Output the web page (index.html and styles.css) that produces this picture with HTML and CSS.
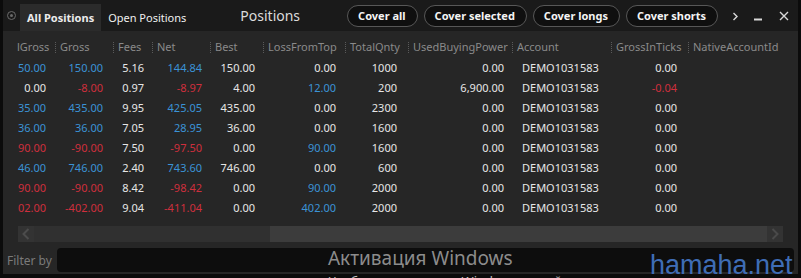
FILE: index.html
```html
<!DOCTYPE html>
<html>
<head>
<meta charset="utf-8">
<link rel="stylesheet" href="styles.css">
</head>
<body>
<div class="window">
  <div class="titlebar">
    <span class="win-icon"></span>
    <div class="tab active">All Positions</div>
    <div class="tab">Open Positions</div>
    <div class="title">Positions</div>
    <div class="buttons">
      <button class="pill">Cover all</button>
      <button class="pill">Cover selected</button>
      <button class="pill">Cover longs</button>
      <button class="pill">Cover shorts</button>
    </div>
    <div class="controls">
      <svg class="ctl-more" width="7" height="9" viewBox="0 0 7 9"><path d="M1.5 1 L5 4.5 L1.5 8" fill="none" stroke="#d8d8d8" stroke-width="1.4"/></svg>
      <svg class="ctl-min" width="9" height="9" viewBox="0 0 9 9"><rect x="0" y="6.5" width="8" height="2" fill="#d8d8d8"/></svg>
      <svg class="ctl-close" width="10" height="10" viewBox="0 0 10 10"><path d="M1 1 L9 9 M9 1 L1 9" stroke="#d8d8d8" stroke-width="1.4"/></svg>
    </div>
  </div>

  <div class="table">
    <div class="row head">
      <div class="h first">lGross</div>
      <div class="h">Gross</div>
      <div class="h">Fees</div>
      <div class="h">Net</div>
      <div class="h">Best</div>
      <div class="h">LossFromTop</div>
      <div class="h">TotalQnty</div>
      <div class="h">UsedBuyingPower</div>
      <div class="h">Account</div>
      <div class="h">GrossInTicks</div>
      <div class="h">NativeAccountId</div>
      <div class="h"></div>
    </div>

    <div class="row">
      <div class="c b">50.00</div><div class="c b">150.00</div><div class="c">5.16</div><div class="c b">144.84</div><div class="c">150.00</div><div class="c">0.00</div><div class="c">1000</div><div class="c">0.00</div><div class="c acc">DEMO1031583</div><div class="c">0.00</div><div class="c"></div>
    </div>
    <div class="row">
      <div class="c">0.00</div><div class="c r">-8.00</div><div class="c">0.97</div><div class="c r">-8.97</div><div class="c">4.00</div><div class="c b">12.00</div><div class="c">200</div><div class="c">6,900.00</div><div class="c acc">DEMO1031583</div><div class="c r">-0.04</div><div class="c"></div>
    </div>
    <div class="row">
      <div class="c b">35.00</div><div class="c b">435.00</div><div class="c">9.95</div><div class="c b">425.05</div><div class="c">435.00</div><div class="c">0.00</div><div class="c">2300</div><div class="c">0.00</div><div class="c acc">DEMO1031583</div><div class="c">0.00</div><div class="c"></div>
    </div>
    <div class="row">
      <div class="c b">36.00</div><div class="c b">36.00</div><div class="c">7.05</div><div class="c b">28.95</div><div class="c">36.00</div><div class="c">0.00</div><div class="c">1600</div><div class="c">0.00</div><div class="c acc">DEMO1031583</div><div class="c">0.00</div><div class="c"></div>
    </div>
    <div class="row">
      <div class="c r">90.00</div><div class="c r">-90.00</div><div class="c">7.50</div><div class="c r">-97.50</div><div class="c">0.00</div><div class="c b">90.00</div><div class="c">1600</div><div class="c">0.00</div><div class="c acc">DEMO1031583</div><div class="c">0.00</div><div class="c"></div>
    </div>
    <div class="row">
      <div class="c b">46.00</div><div class="c b">746.00</div><div class="c">2.40</div><div class="c b">743.60</div><div class="c">746.00</div><div class="c">0.00</div><div class="c">600</div><div class="c">0.00</div><div class="c acc">DEMO1031583</div><div class="c">0.00</div><div class="c"></div>
    </div>
    <div class="row">
      <div class="c r">90.00</div><div class="c r">-90.00</div><div class="c">8.42</div><div class="c r">-98.42</div><div class="c">0.00</div><div class="c b">90.00</div><div class="c">2000</div><div class="c">0.00</div><div class="c acc">DEMO1031583</div><div class="c">0.00</div><div class="c"></div>
    </div>
    <div class="row">
      <div class="c r">02.00</div><div class="c r">-402.00</div><div class="c">9.04</div><div class="c r">-411.04</div><div class="c">0.00</div><div class="c b">402.00</div><div class="c">2000</div><div class="c">0.00</div><div class="c acc">DEMO1031583</div><div class="c">0.00</div><div class="c"></div>
    </div>
  </div>

  <div class="hscroll">
    <div class="sb-btn left"><svg width="8" height="12" viewBox="0 0 8 12"><path d="M6.5 1 L1.5 6 L6.5 11" fill="none" stroke="#4c4c4c" stroke-width="2"/></svg></div>
    <div class="sb-track"></div>
    <div class="sb-thumb"></div>
    <div class="sb-btn right"><svg width="8" height="12" viewBox="0 0 8 12"><path d="M1.5 1 L6.5 6 L1.5 11" fill="none" stroke="#4a4a4a" stroke-width="2"/></svg></div>
  </div>

  <div class="filter">
    <span class="filter-label">Filter by</span>
    <div class="filter-input"></div>
  </div>
</div>

<div class="wm-win">
  <div class="wm-title">Активация Windows</div>
  <div class="wm-sub">Чтобы активировать Windows, перейдите в параметры.</div>
</div>
<div class="wm-site">hamaha.net</div>
</body>
</html>
```

FILE: styles.css
```css
* { box-sizing: border-box; }
html, body {
  margin: 0;
  padding: 0;
  width: 801px;
  height: 278px;
  overflow: hidden;
  background: #0b0b0b;
  font-family: "Noto Sans", "Open Sans", sans-serif;
  font-size: 11px;
}
.window {
  margin-left: 3px;
  width: 795px;
  height: 274px;
  background: #262626;
  display: flex;
  flex-direction: column;
}

/* title bar */
.titlebar {
  height: 31px;
  background: #1a1a1a;
  display: flex;
  align-items: flex-start;
  flex-shrink: 0;
}
.win-icon {
  width: 9px;
  height: 9px;
  margin: 11px 0 0 4px;
  border-radius: 50%;
  border: 1.5px solid #6a6a6a;
  position: relative;
  flex-shrink: 0;
}
.win-icon::after {
  content: "";
  position: absolute;
  left: 1.5px; top: 1.5px;
  width: 3px; height: 3px;
  border-radius: 50%;
  background: #6a6a6a;
}
.tab {
  margin-top: 4px;
  height: 27px;
  line-height: 28px;
  padding: 0 7px;
  color: #f0f0f0;
  font-size: 11px;
  white-space: nowrap;
}
.tab.active {
  margin-left: 4px;
  background: #2b2b2b;
  font-weight: 700;
  color: #ececec;
}
.title {
  margin-left: 47px;
  margin-top: 5px;
  font-size: 14px;
  line-height: 21px;
  color: #dcdcdc;
}
.buttons {
  margin-left: 47px;
  margin-top: 5px;
  display: flex;
  gap: 6px;
}
.pill {
  height: 22px;
  padding: 0 11px 0 10px;
  border-radius: 11px;
  border: 1.5px solid #575757;
  background: #0f0f0f;
  color: #f4f4f4;
  font-family: "Noto Sans", "Open Sans", sans-serif;
  font-weight: 700;
  font-size: 11px;
  line-height: 18px;
  white-space: nowrap;
}
.controls {
  display: flex;
  align-items: flex-start;
  margin-left: 14px;
  margin-top: 11px;
}
.ctl-more { margin-top: 1px; }
.ctl-min { margin-left: 15px; margin-top: 1px; }
.ctl-close { margin-left: 16px; margin-top: 0; }

/* table */
.table {
  padding-left: 7px;
  margin-top: 5px;
}
.row {
  display: grid;
  grid-template-columns: 45px 58px 39px 58px 53px 82px 63px 104px 99px 77px 95px 1fr;
  height: 20px;
  align-items: center;
}
.row.head { height: 21px; }
.h {
  position: relative;
  color: #8a8a8a;
  padding-left: 5px;
  white-space: nowrap;
  overflow: hidden;
}
.h::before {
  content: "";
  position: absolute;
  left: 0;
  top: 3px;
  height: 13px;
  border-left: 1px dotted #5a5a5a;
}
.h.first { padding-left: 7px; }
.h.first::before { display: none; }
.c {
  text-align: right;
  color: #e6e6e6;
  white-space: nowrap;
  padding-right: 8px;
}
.c.acc { text-align: left; padding-left: 10px; padding-right: 0; }
.row .c:nth-child(1) { padding-right: 9px; }
.row .c:nth-child(2) { padding-right: 10px; }
.row .c:nth-child(6) { padding-right: 9px; }
.row .c:nth-child(7) { padding-right: 11px; }
.row .c:nth-child(10) { padding-right: 11px; }
.c.b { color: #3b93d6; }
.c.r { color: #cf2f3d; }

/* horizontal scrollbar */
.hscroll {
  margin: 9px 0 0 15px;
  width: 765px;
  height: 16px;
  display: flex;
  flex-shrink: 0;
}
.sb-btn {
  width: 16px;
  height: 16px;
  background: #333333;
  display: flex;
  align-items: center;
  justify-content: center;
}
.sb-track { width: 236px; background: #303030; }
.sb-thumb { flex: 1; background: #3c3c3c; }

/* filter */
.filter {
  margin-top: 6px;
  display: flex;
  align-items: center;
  height: 24px;
}
.filter-label {
  width: 54px;
  padding-left: 4px;
  color: #7a7a7a;
  font-size: 12px;
}
.filter-input {
  width: 737px;
  height: 24px;
  background: #0d0d0d;
  border-radius: 4px;
}

/* watermarks */
.wm-win {
  position: absolute;
  left: 328px;
  top: 246px;
  pointer-events: none;
}
.wm-title {
  font-size: 19px;
  line-height: 24px;
  color: #8c8c8c;
  white-space: nowrap;
}
.wm-sub {
  margin-top: 2px;
  font-size: 13px;
  line-height: 18px;
  color: #bdbdbd;
  white-space: nowrap;
}
.wm-site {
  position: absolute;
  left: 650px;
  top: 252px;
  font-family: "Liberation Sans", Arial, sans-serif;
  font-size: 27px;
  line-height: 26px;
  color: #3f6db6;
  white-space: nowrap;
}
```
